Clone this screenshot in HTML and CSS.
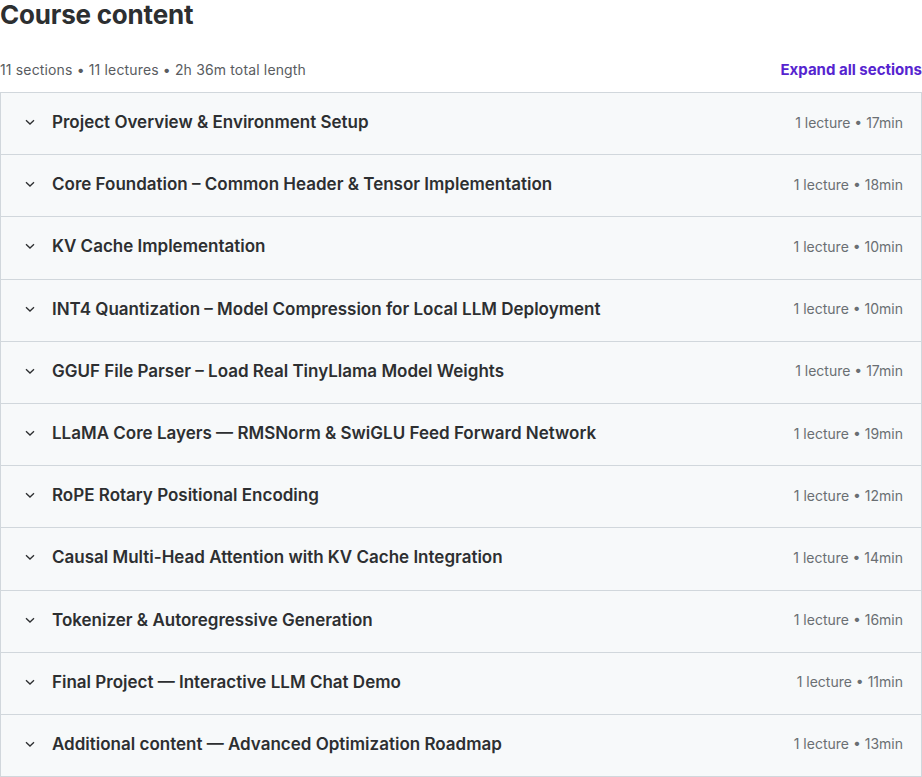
FILE: index.html
```html
<!DOCTYPE html>
<html lang="en">

<head>
    <meta charset="UTF-8">
    <meta name="viewport" content="width=device-width, initial-scale=1.0">
    <title>Course content</title>
    <link rel="stylesheet" href="styles.css">
</head>

<body>
    <div class="course-content">
        <h2 class="title">Course content</h2>

        <div class="summary">
            <span class="summary-text">11 sections • 11 lectures • 2h 36m total length</span>
            <button class="expand-all">Expand all sections</button>
        </div>

        <div class="sections">
            <div class="section">
                <span class="chevron"><svg width="12" height="12" viewBox="0 0 12 12"><path d="M2 4.2 6 8l4-3.8" fill="none" stroke="currentColor" stroke-width="1.3"/></svg></span>
                <span class="section-title">Project Overview &amp; Environment Setup</span>
                <span class="section-meta">1 lecture • 17min</span>
            </div>
            <div class="section">
                <span class="chevron"><svg width="12" height="12" viewBox="0 0 12 12"><path d="M2 4.2 6 8l4-3.8" fill="none" stroke="currentColor" stroke-width="1.3"/></svg></span>
                <span class="section-title">Core Foundation – Common Header &amp; Tensor Implementation</span>
                <span class="section-meta">1 lecture • 18min</span>
            </div>
            <div class="section">
                <span class="chevron"><svg width="12" height="12" viewBox="0 0 12 12"><path d="M2 4.2 6 8l4-3.8" fill="none" stroke="currentColor" stroke-width="1.3"/></svg></span>
                <span class="section-title">KV Cache Implementation</span>
                <span class="section-meta">1 lecture • 10min</span>
            </div>
            <div class="section">
                <span class="chevron"><svg width="12" height="12" viewBox="0 0 12 12"><path d="M2 4.2 6 8l4-3.8" fill="none" stroke="currentColor" stroke-width="1.3"/></svg></span>
                <span class="section-title">INT4 Quantization – Model Compression for Local LLM Deployment</span>
                <span class="section-meta">1 lecture • 10min</span>
            </div>
            <div class="section">
                <span class="chevron"><svg width="12" height="12" viewBox="0 0 12 12"><path d="M2 4.2 6 8l4-3.8" fill="none" stroke="currentColor" stroke-width="1.3"/></svg></span>
                <span class="section-title">GGUF File Parser – Load Real TinyLlama Model Weights</span>
                <span class="section-meta">1 lecture • 17min</span>
            </div>
            <div class="section">
                <span class="chevron"><svg width="12" height="12" viewBox="0 0 12 12"><path d="M2 4.2 6 8l4-3.8" fill="none" stroke="currentColor" stroke-width="1.3"/></svg></span>
                <span class="section-title">LLaMA Core Layers — RMSNorm &amp; SwiGLU Feed Forward Network</span>
                <span class="section-meta">1 lecture • 19min</span>
            </div>
            <div class="section">
                <span class="chevron"><svg width="12" height="12" viewBox="0 0 12 12"><path d="M2 4.2 6 8l4-3.8" fill="none" stroke="currentColor" stroke-width="1.3"/></svg></span>
                <span class="section-title">RoPE Rotary Positional Encoding</span>
                <span class="section-meta">1 lecture • 12min</span>
            </div>
            <div class="section">
                <span class="chevron"><svg width="12" height="12" viewBox="0 0 12 12"><path d="M2 4.2 6 8l4-3.8" fill="none" stroke="currentColor" stroke-width="1.3"/></svg></span>
                <span class="section-title">Causal Multi-Head Attention with KV Cache Integration</span>
                <span class="section-meta">1 lecture • 14min</span>
            </div>
            <div class="section">
                <span class="chevron"><svg width="12" height="12" viewBox="0 0 12 12"><path d="M2 4.2 6 8l4-3.8" fill="none" stroke="currentColor" stroke-width="1.3"/></svg></span>
                <span class="section-title">Tokenizer &amp; Autoregressive Generation</span>
                <span class="section-meta">1 lecture • 16min</span>
            </div>
            <div class="section">
                <span class="chevron"><svg width="12" height="12" viewBox="0 0 12 12"><path d="M2 4.2 6 8l4-3.8" fill="none" stroke="currentColor" stroke-width="1.3"/></svg></span>
                <span class="section-title">Final Project — Interactive LLM Chat Demo</span>
                <span class="section-meta">1 lecture • 11min</span>
            </div>
            <div class="section">
                <span class="chevron"><svg width="12" height="12" viewBox="0 0 12 12"><path d="M2 4.2 6 8l4-3.8" fill="none" stroke="currentColor" stroke-width="1.3"/></svg></span>
                <span class="section-title">Additional content — Advanced Optimization Roadmap</span>
                <span class="section-meta">1 lecture • 13min</span>
            </div>
        </div>
    </div>
</body>

</html>
```

FILE: styles.css
```css
* {
    margin: 0;
    padding: 0;
    box-sizing: border-box;
}

body {
    font-family: 'Inter', 'Noto Sans', sans-serif;
    background: #fff;
    color: #2d2f31;
}

.course-content {
    width: 922px;
}

.title {
    font-size: 26px;
    font-weight: 700;
    line-height: 30px;
    letter-spacing: -0.2px;
}

.summary {
    display: flex;
    justify-content: space-between;
    align-items: center;
    margin-top: 24px;
    height: 30px;
    margin-bottom: 8px;
}

.summary-text {
    font-size: 14px;
    letter-spacing: 0.15px;
    color: #595c5f;
}

.expand-all {
    background: none;
    border: none;
    font-family: inherit;
    font-size: 15px;
    font-weight: 700;
    color: #5624d0;
    cursor: pointer;
}

.sections {
    border: 1px solid #d1d7dc;
    border-bottom: none;
}

.section {
    display: flex;
    align-items: center;
    height: 62.2px;
    background: #f7f9fa;
    border-bottom: 1px solid #d1d7dc;
    padding: 0 18px 3px 23px;
}

.chevron {
    display: flex;
    width: 12px;
    color: #2d2f31;
    margin-right: 16px;
}

.section-title {
    flex: 1;
    font-size: 17px;
    font-weight: 600;
    color: #2d2f31;
}

.section-meta {
    font-size: 14px;
    color: #6a6f73;
}
```
